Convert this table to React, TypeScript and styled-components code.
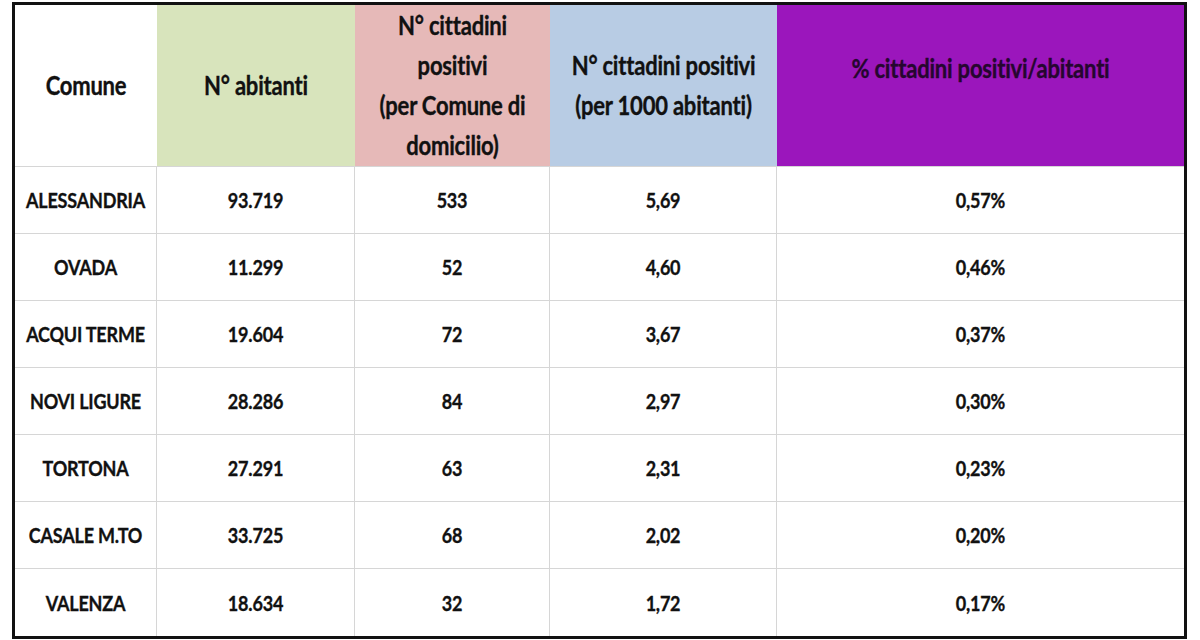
import React from 'react';
import styled, { createGlobalStyle } from 'styled-components';

const GlobalStyle = createGlobalStyle`
  html, body {
    margin: 0;
    padding: 0;
    background: #ffffff;
  }
  body {
    font-family: Lato, "Open Sans", "Liberation Sans", sans-serif;
    color: #111;
  }
`;

const Page = styled.div`
  width: 1200px;
  height: 640px;
  padding: 2px 0 0 12px;
  box-sizing: border-box;
  overflow: hidden;
`;

const Table = styled.table`
  width: 1175px;
  border: 3px solid #111;
  border-collapse: separate;
  border-spacing: 0;
  table-layout: fixed;
`;

const HeadCell = styled.th<{ $bg: string; $color?: string; $lift?: number }>`
  height: 162px;
  padding: 0 6px ${(p) => p.$lift ?? 0}px;
  box-sizing: border-box;
  background: ${(p) => p.$bg};
  color: ${(p) => p.$color ?? '#111'};
  font-size: 22px;
  font-weight: 700;
  line-height: 40px;
  text-align: center;
  vertical-align: middle;
  border-bottom: 1px solid #d6d6d6;
`;

const Cell = styled.td<{ $last?: boolean }>`
  height: 67px;
  padding: 0 4px;
  box-sizing: border-box;
  font-size: 18px;
  font-weight: 700;
  text-align: center;
  vertical-align: middle;
  border-right: ${(p) => (p.$last ? 'none' : '1px solid #d6d6d6')};
  border-bottom: 1px solid #d6d6d6;
`;

const Row = styled.tr`
  &:last-child td {
    border-bottom: none;
  }
`;

const Tall = styled.span`
  display: inline-block;
  transform: scaleY(1.18);
  letter-spacing: -0.2px;
  -webkit-text-stroke: 0.3px currentColor;
`;

const columns = [
  { w: 142, bg: '#ffffff', label: ['Comune'] },
  { w: 198, bg: '#d8e4bc', label: ['N° abitanti'] },
  { w: 195, bg: '#e6b9b8', label: ['N° cittadini', 'positivi', '(per Comune di', 'domicilio)'] },
  { w: 227, bg: '#b8cce4', label: ['N° cittadini positivi', '(per 1000 abitanti)'] },
  { w: 407, bg: '#9b16bc', label: ['% cittadini positivi/abitanti'], color: '#26062f', lift: 34 },
];

const rows = [
  ['ALESSANDRIA', '93.719', '533', '5,69', '0,57%'],
  ['OVADA', '11.299', '52', '4,60', '0,46%'],
  ['ACQUI TERME', '19.604', '72', '3,67', '0,37%'],
  ['NOVI LIGURE', '28.286', '84', '2,97', '0,30%'],
  ['TORTONA', '27.291', '63', '2,31', '0,23%'],
  ['CASALE M.TO', '33.725', '68', '2,02', '0,20%'],
  ['VALENZA', '18.634', '32', '1,72', '0,17%'],
];

export default function App() {
  return (
    <>
      <GlobalStyle />
      <Page>
        <Table>
          <colgroup>
            {columns.map((c, i) => (
              <col key={i} style={{ width: c.w }} />
            ))}
          </colgroup>
          <thead>
            <tr>
              {columns.map((c, i) => (
                <HeadCell key={i} $bg={c.bg} $color={c.color} $lift={c.lift}>
                  {c.label.map((line, j) => (
                    <React.Fragment key={j}>
                      <Tall>{line}</Tall>
                      {j < c.label.length - 1 && <br />}
                    </React.Fragment>
                  ))}
                </HeadCell>
              ))}
            </tr>
          </thead>
          <tbody>
            {rows.map((r) => (
              <Row key={r[0]}>
                {r.map((v, i) => (
                  <Cell key={i} $last={i === r.length - 1}>
                    <Tall>{v}</Tall>
                  </Cell>
                ))}
              </Row>
            ))}
          </tbody>
        </Table>
      </Page>
    </>
  );
}
